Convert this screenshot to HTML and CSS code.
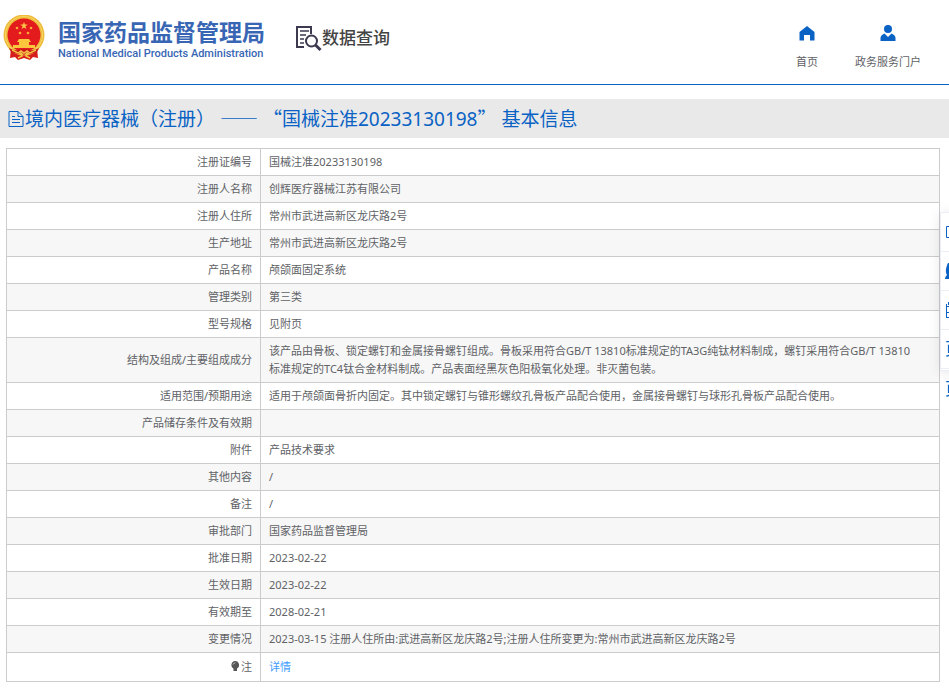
FILE: index.html
```html
<!DOCTYPE html>
<html lang="zh-CN">
<head>
<meta charset="utf-8">
<meta name="viewport" content="width=device-width, initial-scale=1">
<title>国家药品监督管理局 数据查询</title>
<link rel="stylesheet" href="styles.css">
</head>
<body>
<header class="top">
  <a class="brand" href="#">
    <svg class="emblem" viewBox="0 0 42 46" aria-hidden="true">
      <path d="M8 33L7 43l5-1 3 3 6-2 6 2 3-3 5 1-1-10z" fill="#d71d1d"/>
      <circle cx="21" cy="20" r="20.500" fill="#eebb3d"/>
      <circle cx="21" cy="20" r="18.500" fill="none" stroke="#f8d864"/>
      <circle cx="21" cy="20" r="16.500" fill="#e31b1c"/>
      <path d="M21 7l1 2.600h2.700l-2.200 1.700.8 2.700-2.300-1.600-2.300 1.600.8-2.700-2.200-1.700h2.700z" fill="#ffc34b"/>
      <circle cx="14" cy="13" r="1.300" fill="#f9aa3a"/><circle cx="28" cy="13" r="1.300" fill="#f9aa3a"/>
      <circle cx="17" cy="18" r="1.300" fill="#f9aa3a"/><circle cx="25" cy="18" r="1.300" fill="#f9aa3a"/>
      <path d="M16 24h10l2 3h-2v3h6v3H10v-3h6v-3h-2z" fill="#fbc63e"/>
      <path d="M6 33c5 3 8 2 10 2l5-1 5 1c2 0 5 1 10-2l-2 4-7 2-3-2-3 3-3-3-3 2-7-2z" fill="#c51818"/>
      <path d="M9 35l6 3 3-2 3 2 3-2 3 2 6-3M15 43l4-2-2-3M27 43l-4-2 2-3" fill="none" stroke="#f5c044" stroke-width="1.500"/>
    </svg>
    <span class="brand-text">
      <span class="brand-cn">国家药品监督管理局</span>
      <span class="brand-en">National Medical Products Administration</span>
    </span>
  </a>
  <a class="section" href="#">
    <svg class="section-icon" viewBox="0 0 27 27" aria-hidden="true" fill="none" stroke="#3d3a50">
      <path d="M9 22H2V2h14v7" stroke-width="2"/>
      <path d="M5 6h9M5 10h6M5 14h4M5 18h4" stroke-width="1.500"/>
      <circle cx="16.500" cy="16" r="5.500" stroke-width="2"/>
      <path d="M20.500 20l5 5" stroke-width="3"/>
    </svg>
    <span>数据查询</span>
  </a>
  <nav class="nav">
    <a href="#">
      <svg viewBox="0 0 16 16" aria-hidden="true"><path d="M8 1L.500 7v8.500H5V10h6v5.500h4.500V7z" fill="#0a62c4"/></svg>
      首页
    </a>
    <a href="#">
      <svg viewBox="0 0 16 16" aria-hidden="true"><circle cx="8" cy="4" r="4" fill="#0a62c4"/><path d="M.500 16v-3c0-2 2-4 4-4.500L8 12l3.500-3.500c2 .500 4 2.500 4 4.500v3z" fill="#0a62c4"/></svg>
      政务服务门户
    </a>
  </nav>
</header>
<main>
  <h1 class="title">
    <svg viewBox="0 0 16 18" aria-hidden="true" fill="none" stroke="#0a62c4"><path d="M1 1.500h9l5 5v10H1zM10 1.500v5h5M4 6.500h3M4 9.500h8M4 12.500h8"/></svg>
    <span>境内医疗器械（注册） <span class="cjk">——</span> <span class="cjk">“</span>国械注准20233130198<span class="cjk">”</span> 基本信息</span>
  </h1>
  <table class="info">
    <tbody>
      <tr><th scope="row">注册证编号</th><td>国械注准20233130198</td></tr>
      <tr><th scope="row">注册人名称</th><td>创辉医疗器械江苏有限公司</td></tr>
      <tr><th scope="row">注册人住所</th><td>常州市武进高新区龙庆路2号</td></tr>
      <tr><th scope="row">生产地址</th><td>常州市武进高新区龙庆路2号</td></tr>
      <tr><th scope="row">产品名称</th><td>颅颌面固定系统</td></tr>
      <tr><th scope="row">管理类别</th><td>第三类</td></tr>
      <tr><th scope="row">型号规格</th><td>见附页</td></tr>
      <tr><th scope="row">结构及组成/主要组成成分</th><td>该产品由骨板、锁定螺钉和金属接骨螺钉组成。骨板采用符合GB/T 13810标准规定的TA3G纯钛材料制成，螺钉采用符合GB/T 13810<br>标准规定的TC4钛合金材料制成。产品表面经黑灰色阳极氧化处理。非灭菌包装。</td></tr>
      <tr><th scope="row">适用范围/预期用途</th><td>适用于颅颌面骨折内固定。其中锁定螺钉与锥形螺纹孔骨板产品配合使用，金属接骨螺钉与球形孔骨板产品配合使用。</td></tr>
      <tr><th scope="row">产品储存条件及有效期</th><td></td></tr>
      <tr><th scope="row">附件</th><td>产品技术要求</td></tr>
      <tr><th scope="row">其他内容</th><td>/</td></tr>
      <tr><th scope="row">备注</th><td>/</td></tr>
      <tr><th scope="row">审批部门</th><td>国家药品监督管理局</td></tr>
      <tr><th scope="row">批准日期</th><td>2023-02-22</td></tr>
      <tr><th scope="row">生效日期</th><td>2023-02-22</td></tr>
      <tr><th scope="row">有效期至</th><td>2028-02-21</td></tr>
      <tr><th scope="row">变更情况</th><td>2023-03-15 注册人住所由:武进高新区龙庆路2号;注册人住所变更为:常州市武进高新区龙庆路2号</td></tr>
      <tr class="last"><th scope="row"><svg class="bulb" viewBox="0 0 8 10" aria-hidden="true"><path d="M4 0a4 4 0 0 1 2 7.500V10H2.500V7.500A4 4 0 0 1 4 0z" fill="#555"/><path d="M4 1.500L2 3.500" stroke="#ddd"/></svg>注</th><td><a href="#">详情</a></td></tr>
    </tbody>
  </table>
</main>
<aside class="side">
  <a href="#"><svg viewBox="0 0 16 16" aria-hidden="true" fill="none" stroke="#0a62c4"><path d="M1.500 2.500h13v11h-13z"/></svg></a>
  <a href="#"><svg viewBox="0 0 16 16" aria-hidden="true"><path d="M3 0h10v8l3 8H0c0-2 1-3 2-4-2-3-1-8 1-12z" fill="#0a62c4"/></svg></a>
  <a href="#"><svg viewBox="0 0 16 16" aria-hidden="true" fill="none" stroke="#0a62c4"><path d="M3.500 0v3M1.500 2v14M1.500 4.500h13v11h-13M1 10.500h13"/></svg></a>
  <a href="#">页</a>
  <a href="#">页</a>
</aside>
</body>
</html>
```
FILE: styles.css
```css
* { box-sizing: border-box; }
body {
  margin: 0;
  overflow: hidden;
  background: #fff;
  color: #606266;
  font: 11px/18px "Noto Sans", "Noto Sans CJK SC", sans-serif;
}
a { color: inherit; text-decoration: none; }
.top {
  display: flex;
  align-items: center;
  height: 85px;
  padding: 0 28px 8px 3px;
  border-bottom: 1px solid #0a62c4;
}
.brand { display: flex; align-items: center; gap: 13px; color: #3866b4; }
.emblem { width: 42px; height: 46px; }
.brand-text { display: flex; flex-direction: column; padding-top: 4px; }
.brand-cn { font-size: 23px; line-height: 28px; font-weight: 700; }
.brand-en { font: 500 11px/16px Roboto, sans-serif; }
.section { display: flex; align-items: center; margin-left: 30px; color: #444; font-size: 17px; font-weight: 500; }
.section-icon { width: 27px; height: 27px; }
.nav { display: flex; gap: 37px; margin-left: auto; padding-top: 20px; }
.nav a { display: flex; flex-direction: column; align-items: center; gap: 12px; }
.nav svg { width: 16px; height: 16px; }
.title {
  display: flex;
  align-items: center;
  gap: 1px;
  margin: 14px 0 10px;
  padding: 0 8px;
  height: 39px;
  background: #e9e9e9;
  color: #0a62c4;
  font-size: 19px;
  font-weight: 400;
}
.title svg { width: 16px; height: 18px; }
.cjk { font-family: "Noto Sans CJK SC", sans-serif; }
.info {
  width: calc(100% - 15px);
  margin: 0 9px 0 6px;
  border-collapse: collapse;
  border: 1px solid #ccc;
}
.info th, .info td { padding: 4px 8px; height: 27px; border: 1px solid #ccc; font-weight: 400; text-align: left; }
.info th { width: 254px; text-align: right; }
.info tr:nth-child(even) { background: #f7f7f7; }
.info .last th, .info .last td { height: 29px; }
.info a { color: #409eff; }
.bulb { width: 8px; height: 10px; margin-right: 2px; }
.side {
  position: fixed;
  top: 212px;
  right: -31px;
  width: 40px;
  height: 159px;
  background: #fff;
  border: 1px solid #ebeef5;
  box-shadow: 0 2px 12px rgba(0, 0, 0, 0.1);
  color: #0a62c4;
  font-size: 17px;
}
.side a {
  display: flex;
  align-items: center;
  height: 39px;
  padding-left: 4px;
  border-bottom: 1px solid #ebeef5;
}
.side a:last-child { border-bottom: 0; }
.side svg { flex: none; width: 16px; height: 16px; }
```
